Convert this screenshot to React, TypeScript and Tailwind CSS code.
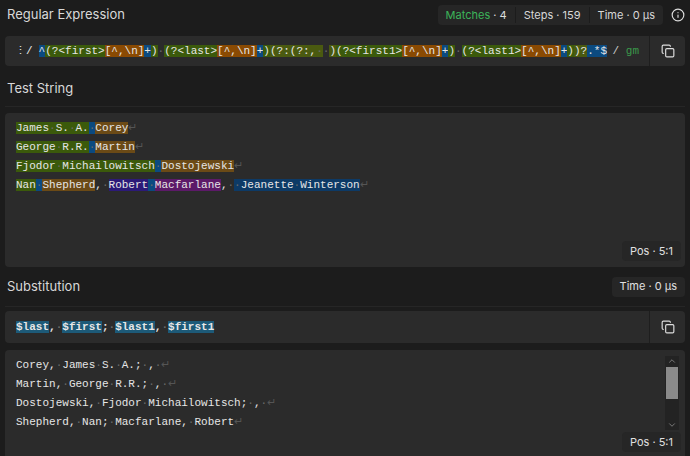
import React from 'react';
import { Copy, Info, ChevronUp, ChevronDown } from 'lucide-react';

type Tok = [string, string?];

const C: Record<string, string> = {
  b: 'bg-[#0b4a80]',
  g: 'bg-[#3b5a0b]',
  o: 'bg-[#8a4a02]',
  ol: 'bg-[#4a5a10]',
  br: 'bg-[#6b4a16]',
  p: 'bg-[#2c1a78]',
  m: 'bg-[#5c1a68]',
  s: 'bg-[#1d5a78]',
  d: 'bg-[#0d3a66]',
};

const Text: React.FC<{ t: string }> = ({ t }) => (
  <>
    {t.split('').map((ch, i) =>
      ch === ' ' ? (
        <span key={i} className="text-[#6a6a6a]">·</span>
      ) : (
        <span key={i}>{ch}</span>
      )
    )}
  </>
);

const Line: React.FC<{ toks: Tok[]; nl?: boolean }> = ({ toks, nl = true }) => (
  <div className="whitespace-pre h-[19px] leading-[19px]">
    {toks.map(([t, c], i) => (
      <span key={i} className={c ? C[c] : ''}>
        <Text t={t} />
      </span>
    ))}
    {nl && <span className="text-[#555]">↵</span>}
  </div>
);

const regex: Tok[] = [
  ['^', 'b'], ['(?<first>', 'g'], ['[^,\\n]', 'o'], ['+', 'b'], [')', 'g'], [' '],
  ['(?<last>', 'g'], ['[^,\\n]', 'o'], ['+', 'b'], [')', 'g'], ['(?:(?:, ', 'ol'], [' '], [')', 'ol'],
  ['(?<first1>', 'g'], ['[^,\\n]', 'o'], ['+', 'b'], [')', 'g'], [' '],
  ['(?<last1>', 'g'], ['[^,\\n]', 'o'], ['+', 'b'], [')', 'g'], [')?', 'ol'], ['.*$', 'b'],
];

const mono = 'font-[Liberation_Mono] text-[11px] text-[#e6e6e6]';

const Badge: React.FC<{ children: React.ReactNode }> = ({ children }) => (
  <div className="bg-[#262626] rounded px-2 h-[20px] flex items-center text-[11px] text-[#e0e0e0]">{children}</div>
);

const CopyBtn = () => (
  <div className="w-[36px] self-stretch border-l border-[#1e1e1e] flex items-center justify-center text-[#ddd]">
    <Copy size={14} />
  </div>
);

export default function App() {
  return (
    <div className="w-[690px] h-[456px] overflow-hidden bg-[#1c1c1c] font-[Inter] text-[#d8d8d8] flex flex-col px-[5px]">
      <div className="h-[30px] flex items-center justify-between pl-[2px]">
        <span className="text-[13px]">Regular Expression</span>
        <div className="flex items-center gap-2">
          <div className="flex bg-[#262626] rounded text-[11px] h-[20px] items-center">
            <span className="px-2 text-[#3cb45a]">Matches <span className="text-[#ddd]">· 4</span></span>
            <span className="px-2 border-l border-[#1c1c1c]">Steps · 159</span>
            <span className="px-2 border-l border-[#1c1c1c]">Time · 0 µs</span>
          </div>
          <Info size={14} className="text-[#ddd]" />
        </div>
      </div>
      <div className="mt-[6px] h-[30px] bg-[#2b2b2b] rounded flex items-center">
        <span className={`${mono} pl-[10px] pr-[6px] text-[#ccc]`}>⋮/</span>
        <div className={`${mono} flex-1`}><Line toks={regex} nl={false} /></div>
        <span className={`${mono} pr-[10px]`}><span className="text-[#ccc]">/ </span><span className="text-[#3a9a4a]">gm</span></span>
        <CopyBtn />
      </div>
      <div className="h-[36px] mt-[5px] flex items-center border-b border-[#262626] pl-[2px] text-[13px]">Test String</div>
      <div className="mt-[6px] h-[154px] bg-[#2b2b2b] rounded relative">
        <div className={`${mono} pt-[6px] pl-[11px]`}>
          <Line toks={[['James S. A.', 'g'], [' ', 'b'], ['Corey', 'br']]} />
          <Line toks={[['George R.R.', 'g'], [' ', 'b'], ['Martin', 'br']]} />
          <Line toks={[['Fjodor Michailowitsch', 'g'], [' ', 'b'], ['Dostojewski', 'br']]} />
          <Line toks={[['Nan', 'g'], [' ', 'b'], ['Shepherd', 'br'], [', '], ['Robert', 'p'], [' ', 'b'], ['Macfarlane', 'm'], [', '], [' Jeanette Winterson', 'd']]} />
        </div>
        <div className="absolute right-[4px] bottom-[6px]"><Badge>Pos · 5:1</Badge></div>
      </div>
      <div className="h-[40px] flex items-center justify-between border-b border-[#262626] pl-[2px] text-[13px]">
        <span>Substitution</span>
        <Badge>Time · 0 µs</Badge>
      </div>
      <div className="mt-[4px] h-[32px] bg-[#2b2b2b] rounded flex items-center">
        <div className={`${mono} flex-1 pl-[11px] font-bold`}>
          <Line nl={false} toks={[['$last', 's'], [', '], ['$first', 's'], ['; '], ['$last1', 's'], [', '], ['$first1', 's']]} />
        </div>
        <CopyBtn />
      </div>
      <div className="mt-[7px] flex-1 bg-[#2b2b2b] rounded-t relative">
        <div className={`${mono} pt-[6px] pl-[11px]`}>
          <Line toks={[['Corey, James S. A.; , ']]} />
          <Line toks={[['Martin, George R.R.; , ']]} />
          <Line toks={[['Dostojewski, Fjodor Michailowitsch; , ']]} />
          <Line toks={[['Shepherd, Nan; Macfarlane, Robert']]} />
        </div>
        <div className="absolute right-[6px] top-[6px] w-[14px] h-[74px] bg-[#232323] flex flex-col items-center">
          <ChevronUp size={10} className="text-[#888]" />
          <div className="w-[12px] flex-1 bg-[#8a8a8a] my-[1px]" />
          <div className="h-[20px]" />
          <ChevronDown size={10} className="text-[#888]" />
        </div>
        <div className="absolute right-[4px] top-[82px]"><Badge>Pos · 5:1</Badge></div>
      </div>
    </div>
  );
}
